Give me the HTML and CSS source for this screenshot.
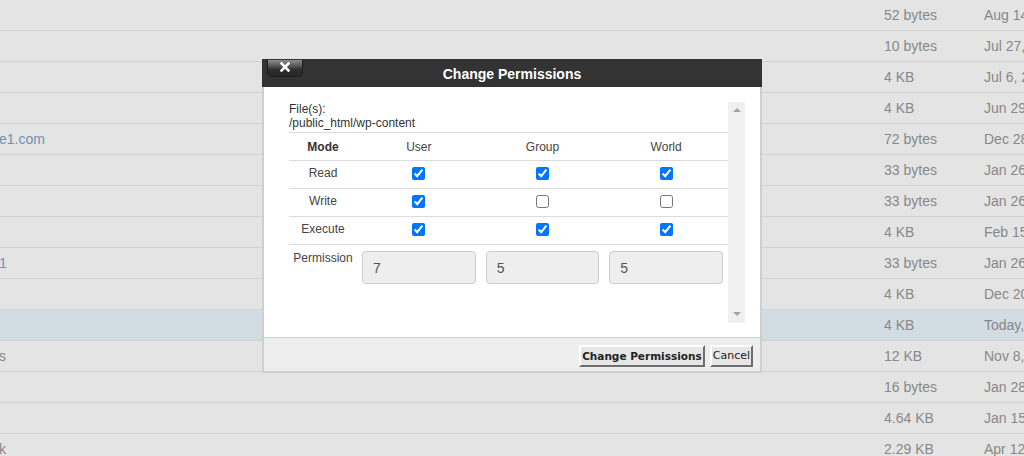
FILE: index.html
```html
<!DOCTYPE html>
<html>
<head>
<meta charset="utf-8">
<link rel="stylesheet" href="styles.css">
</head>
<body>
<div class="files">
  <div class="row"><span class="name"></span><span class="size">52 bytes</span><span class="date">Aug 14, 2019</span></div>
  <div class="row"><span class="name"></span><span class="size">10 bytes</span><span class="date">Jul 27, 2019</span></div>
  <div class="row"><span class="name"></span><span class="size">4 KB</span><span class="date">Jul 6, 2019</span></div>
  <div class="row"><span class="name"></span><span class="size">4 KB</span><span class="date">Jun 29, 2019</span></div>
  <div class="row"><span class="name link">e1.com</span><span class="size">72 bytes</span><span class="date">Dec 28, 2018</span></div>
  <div class="row"><span class="name"></span><span class="size">33 bytes</span><span class="date">Jan 26, 2019</span></div>
  <div class="row"><span class="name"></span><span class="size">33 bytes</span><span class="date">Jan 26, 2019</span></div>
  <div class="row"><span class="name"></span><span class="size">4 KB</span><span class="date">Feb 15, 2019</span></div>
  <div class="row"><span class="name link">1</span><span class="size">33 bytes</span><span class="date">Jan 26, 2019</span></div>
  <div class="row"><span class="name"></span><span class="size">4 KB</span><span class="date">Dec 20, 2018</span></div>
  <div class="row selected"><span class="name"></span><span class="size">4 KB</span><span class="date">Today, 10:12</span></div>
  <div class="row"><span class="name">s</span><span class="size">12 KB</span><span class="date">Nov 8, 2018</span></div>
  <div class="row"><span class="name"></span><span class="size">16 bytes</span><span class="date">Jan 28, 2019</span></div>
  <div class="row"><span class="name"></span><span class="size">4.64 KB</span><span class="date">Jan 15, 2019</span></div>
  <div class="row"><span class="name">k</span><span class="size">2.29 KB</span><span class="date">Apr 12, 2019</span></div>
</div>

<div class="dialog">
  <div class="dlg-head">
    <button class="dlg-close" type="button"><svg width="10" height="10" viewBox="0 0 10 10"><path d="M1.5 1.5L8.5 8.5M8.5 1.5L1.5 8.5" stroke="#fff" stroke-width="2.6" stroke-linecap="square"/></svg></button>
    <span class="dlg-title">Change Permissions</span>
  </div>
  <div class="dlg-body">
    <div class="scroll">
      <div class="scroll-content">
        <div class="files-label">File(s):<br>/public_html/wp-content</div>
        <table class="perm">
          <colgroup><col class="c-mode"><col class="c-col"><col class="c-col"><col class="c-col"></colgroup>
          <tr class="head"><th>Mode</th><td>User</td><td>Group</td><td>World</td></tr>
          <tr class="cb-row"><td>Read</td><td><input type="checkbox" checked></td><td><input type="checkbox" checked></td><td><input type="checkbox" checked></td></tr>
          <tr class="cb-row"><td>Write</td><td><input type="checkbox" checked></td><td><input type="checkbox"></td><td><input type="checkbox"></td></tr>
          <tr class="cb-row"><td>Execute</td><td><input type="checkbox" checked></td><td><input type="checkbox" checked></td><td><input type="checkbox" checked></td></tr>
          <tr class="perm-row"><td class="plabel">Permission</td><td><input class="pinput" type="text" value="7"></td><td><input class="pinput" type="text" value="5"></td><td><input class="pinput" type="text" value="5"></td></tr>
        </table>
      </div>
      <div class="scrollbar"><span class="arr up"></span><span class="arr down"></span></div>
    </div>
  </div>
  <div class="dlg-foot">
    <button class="btn btn-primary" type="button">Change Permissions</button>
    <button class="btn" type="button">Cancel</button>
  </div>
</div>
</body>
</html>
```
FILE: styles.css
```css
html, body {
  margin: 0;
  padding: 0;
}
body {
  width: 1024px;
  height: 456px;
  overflow: hidden;
  background: #e4e4e4;
  font-family: "Liberation Sans", Arial, sans-serif;
  position: relative;
}

.files {
  display: flex;
  flex-direction: column;
}
.row {
  display: flex;
  height: 30px;
  line-height: 30px;
  border-bottom: 1px solid #d2d2d2;
  background: #e4e4e4;
  font-size: 14px;
  color: #888888;
  white-space: nowrap;
}
.row.selected {
  background: #d2dce3;
}
.name {
  flex: 0 0 884px;
  text-indent: -1px;
}
.name.link {
  color: #6f92b5;
}
.size {
  flex: 0 0 100px;
}
.date {
  flex: 0 0 auto;
}

/* dialog */
.dialog {
  position: absolute;
  left: 262px;
  top: 59px;
  width: 500px;
  display: flex;
  flex-direction: column;
  font-size: 12px;
  color: #333;
}
.dlg-head {
  height: 28px;
  background: #333333;
  display: flex;
  align-items: center;
  justify-content: center;
  position: relative;
}
.dlg-title {
  color: #fff;
  font-weight: bold;
  font-size: 14px;
  padding-top: 1px;
}
.dlg-close {
  position: absolute;
  left: 5px;
  top: 1px;
  width: 36px;
  height: 17px;
  padding: 0;
  border: 1px solid #1e1e1e;
  border-top: none;
  border-radius: 0 0 5px 5px;
  background: linear-gradient(#8e8e8e 0%, #5a5a5a 35%, #2e2e2e 60%, #272727 100%);
  display: flex;
  align-items: center;
  justify-content: center;
}
.dlg-close svg {
  display: block;
  margin-top: -2px;
}

.dlg-body {
  background: #fff;
  border-left: 2px solid #cfcfcf;
  border-right: 2px solid #cfcfcf;
  padding: 15px 15px 14px 25px;
}
.scroll {
  height: 221px;
  display: flex;
}
.scroll-content {
  flex: 1 1 auto;
}
.scrollbar {
  flex: 0 0 17px;
  background: #f0f0f0;
  display: flex;
  flex-direction: column;
  justify-content: space-between;
  align-items: center;
  padding: 6px 0 7px;
}
.arr {
  width: 0;
  height: 0;
  border-left: 4px solid transparent;
  border-right: 4px solid transparent;
}
.arr.up {
  border-bottom: 4px solid #a3a3a3;
}
.arr.down {
  border-top: 4px solid #a3a3a3;
}

.files-label {
  line-height: 14px;
  margin-bottom: 2px;
  color: #333;
}

.perm {
  width: 100%;
  border-collapse: collapse;
  color: #444;
}
.c-mode { width: 68px; }
.c-col { width: 124px; }
.perm tr {
  border-top: 1px solid #dcdcdc;
}
.perm th, .perm td {
  height: 27px;
  padding: 0;
  text-align: center;
  vertical-align: middle;
  font-weight: normal;
}
.perm th {
  font-weight: bold;
  color: #333;
}
.perm .cb-row td {
  padding-bottom: 4px;
  height: 23px;
}
.perm input[type="checkbox"] {
  margin: 0;
  width: 13px;
  height: 13px;
  vertical-align: middle;
}
.perm .perm-row td {
  vertical-align: top;
  padding: 6px 5px 0;
}
.perm .perm-row td.plabel {
  padding: 6px 0 0;
  line-height: 14px;
}
.pinput {
  box-sizing: border-box;
  width: 100%;
  height: 33px;
  margin: 0;
  padding: 0 10px;
  border: 1px solid #cccccc;
  border-radius: 4px;
  background: #eeeeee;
  font-family: "Liberation Sans", Arial, sans-serif;
  font-size: 14px;
  color: #555;
  outline: none;
}

.dlg-foot {
  background: #eeeeee;
  border-top: 1px solid #cfcfcf;
  border-left: 2px solid #cfcfcf;
  border-right: 2px solid #cfcfcf;
  border-bottom: 2px solid #cfcfcf;
  display: flex;
  justify-content: flex-end;
  align-items: flex-start;
  gap: 5px;
  padding: 7px 7px 0 0;
  box-sizing: border-box;
  height: 36px;
}
.btn {
  height: 22px;
  padding: 0 1px;
  margin: 0;
  font-family: "DejaVu Sans", Verdana, sans-serif;
  font-size: 11px;
  color: #222;
  background: #e6e6e6;
  border: 2px solid;
  border-color: #ffffff #6e6e6e #6e6e6e #ffffff;
  border-radius: 0;
  line-height: 18px;
}
.btn-primary {
  font-weight: bold;
  font-size: 10.5px;
}
```
